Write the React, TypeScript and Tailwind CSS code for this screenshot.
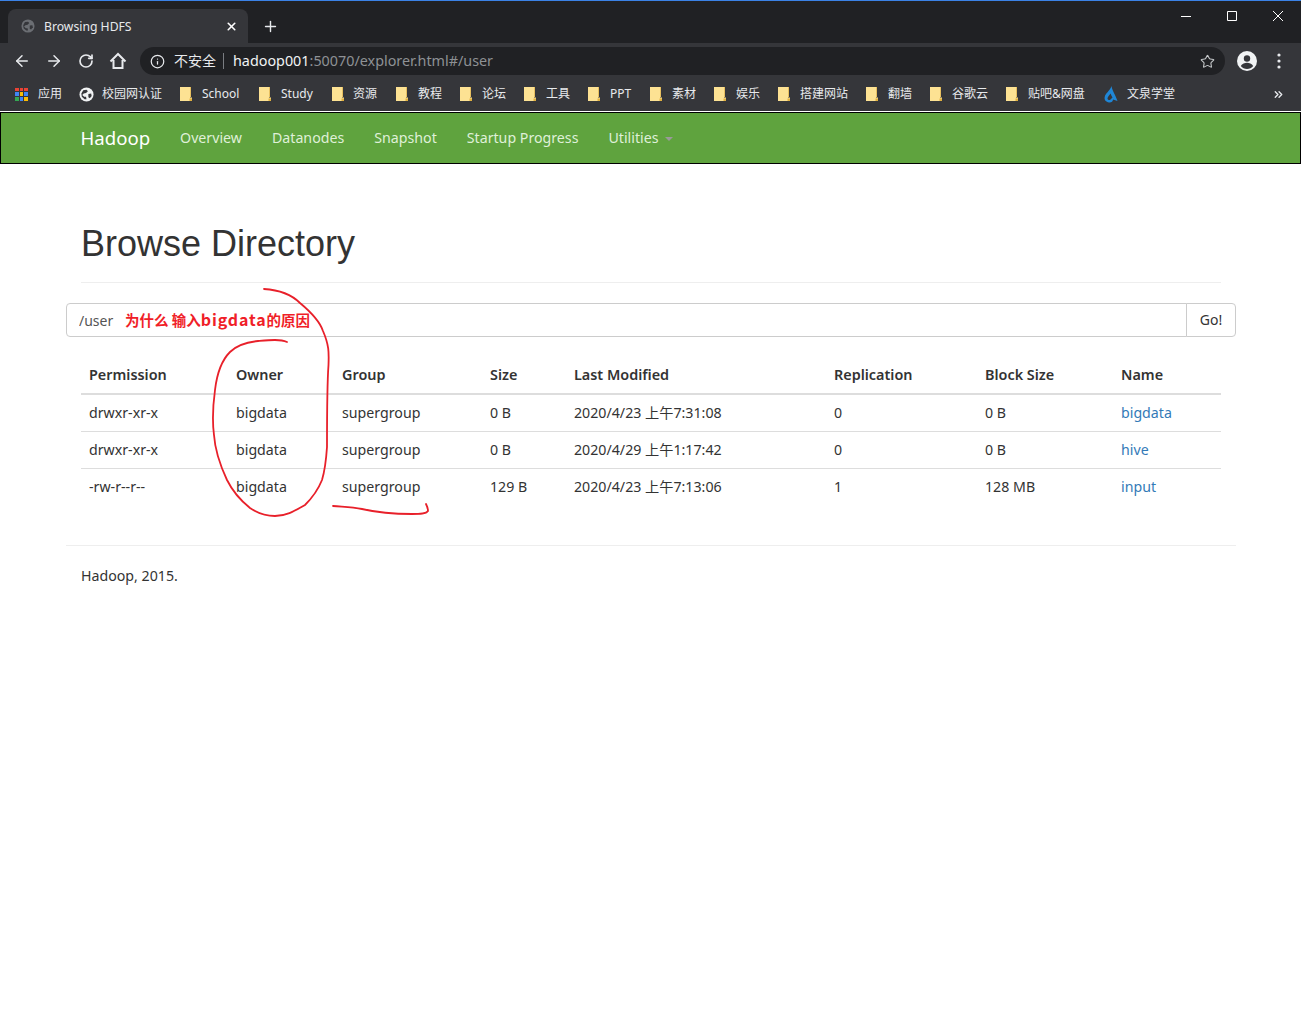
import React from 'react';
import { ArrowLeft, ArrowRight, RotateCw, Star, Info, Plus, X, ChevronsRight } from 'lucide-react';

const uiFont = 'font-["Noto_Sans","Noto_Sans_CJK_SC",sans-serif]';

const bookmarks: { label: string; kind: 'apps' | 'globe' | 'folder' | 'drop'; iconGap: string; width: string }[] = [
  { label: '应用', kind: 'apps', iconGap: 'w-[23px]', width: 'w-[64px]' },
  { label: '校园网认证', kind: 'globe', iconGap: 'w-[23px]', width: 'w-[101px]' },
  { label: 'School', kind: 'folder', iconGap: 'w-[22px]', width: 'w-[79px]' },
  { label: 'Study', kind: 'folder', iconGap: 'w-[22px]', width: 'w-[73px]' },
  { label: '资源', kind: 'folder', iconGap: 'w-[21px]', width: 'w-[64px]' },
  { label: '教程', kind: 'folder', iconGap: 'w-[22px]', width: 'w-[64px]' },
  { label: '论坛', kind: 'folder', iconGap: 'w-[22px]', width: 'w-[64px]' },
  { label: '工具', kind: 'folder', iconGap: 'w-[22px]', width: 'w-[64px]' },
  { label: 'PPT', kind: 'folder', iconGap: 'w-[22px]', width: 'w-[62px]' },
  { label: '素材', kind: 'folder', iconGap: 'w-[22px]', width: 'w-[64px]' },
  { label: '娱乐', kind: 'folder', iconGap: 'w-[22px]', width: 'w-[64px]' },
  { label: '搭建网站', kind: 'folder', iconGap: 'w-[22px]', width: 'w-[88px]' },
  { label: '翻墙', kind: 'folder', iconGap: 'w-[22px]', width: 'w-[64px]' },
  { label: '谷歌云', kind: 'folder', iconGap: 'w-[22px]', width: 'w-[76px]' },
  { label: '贴吧&网盘', kind: 'folder', iconGap: 'w-[22px]', width: 'w-[98px]' },
  { label: '文泉学堂', kind: 'drop', iconGap: 'w-[23px]', width: 'w-[100px]' },
];

const rows = [
  { perm: 'drwxr-xr-x', size: '0 B', modified: '2020/4/23 上午7:31:08', repl: '0', block: '0 B', name: 'bigdata' },
  { perm: 'drwxr-xr-x', size: '0 B', modified: '2020/4/29 上午1:17:42', repl: '0', block: '0 B', name: 'hive' },
  { perm: '-rw-r--r--', size: '129 B', modified: '2020/4/23 上午7:13:06', repl: '1', block: '128 MB', name: 'input' },
];

const GlobeIcon = ({ className }: { className: string }) => (
  <svg viewBox="0 0 16 16" className={className}>
    <circle cx="8" cy="8" r="7.5" fill="currentColor" />
    <path d="M4.500 3.500 8 3 9.500 4.500 7.500 6.500 5 7 3.500 8.500 5.500 10.500 7.500 10.500 8 13 6 13 3 10.500 2.500 7Z" fill="#35363a" />
    <path d="M10 7.500 13 7 13.500 9.500 11.500 12 10 11Z" fill="#35363a" />
  </svg>
);

const BookmarkIcon = ({ kind }: { kind: string }) => {
  if (kind === 'apps') {
    return (
      <div className="grid h-[13px] w-[13px] grid-cols-3 gap-px">
        {['#ea4335', '#ea4335', '#ea4335', '#4285f4', '#fbbc05', '#4285f4', '#34a853', '#4285f4', '#fbbc05'].map((c, i) => (
          <span key={i} style={{ backgroundColor: c }} />
        ))}
      </div>
    );
  }
  if (kind === 'globe') return <GlobeIcon className="h-[15px] w-[15px] text-[#f1f3f4]" />;
  if (kind === 'drop') {
    return (
      <svg viewBox="0 0 14 17" className="h-[17px] w-[14px]">
        <path d="M7.500 0C8 4 11 8 13.500 15L9 13.500C9 15.500 7 17 5 16.500 2 16 0 14 .7 11 1.500 7 6 5 7.500 0Z" fill="#1f86d6" />
        <path d="M6.500 7.500C5.500 9.500 3.500 10.500 3.500 12.500 3.500 14 5.500 14.500 6.500 13.500L8.500 11.500C8 10.500 7 9 6.500 7.500Z" fill="#35363a" />
      </svg>
    );
  }
  return (
    <svg viewBox="0 0 12 14" className="h-[14px] w-[12px]">
      <path d="M0 0H10V10.500H12V14H0Z" fill="#fde293" />
      <path d="M9.500 14V11.500H12V14Z" fill="#e0b040" />
      <path d="M10 0H11V10H10Z" fill="#e8c060" />
    </svg>
  );
};

export default function App() {
  return (
    <div className='relative min-h-[1028px] bg-white font-["Noto_Sans","Noto_Sans_CJK_SC",sans-serif] text-sm text-[#333]'>
      {/* Browser chrome */}
      <div className={`${uiFont} bg-[#35363a] text-[#e8eaed]`}>
        <div className="h-px bg-[#3b82e6]" />
        <div className="flex h-[42px] items-end justify-between bg-[#202124]">
          <div className="flex items-end">
            <div className="ml-2 flex h-[34px] w-[240px] items-center rounded-t-lg bg-[#35363a] pl-[13px] pr-[10px]">
              <GlobeIcon className="h-[14px] w-[14px] text-[#6b6e73]" />
              <span className="ml-[9px] flex-1 pt-px text-[12.2px] text-[#e8eaed]">Browsing HDFS</span>
              <X className="h-[13px] w-[13px] text-white" strokeWidth={3} />
            </div>
            <Plus className="mb-[8px] ml-[14px] h-[17px] w-[17px] text-[#e8eaed]" strokeWidth={2} />
          </div>
          <div className="mb-[22px] flex items-center gap-[36px] pr-[18px] text-white">
            <svg width="10" height="10" viewBox="0 0 10 10" stroke="currentColor" fill="none"><path d="M0 5.500H10" /></svg>
            <svg width="10" height="10" viewBox="0 0 10 10" stroke="currentColor" fill="none"><path d="M.5.500H9.500V9.500H.5Z" /></svg>
            <svg width="10" height="10" viewBox="0 0 10 10" stroke="currentColor" fill="none"><path d="M0 0 10 10M10 0 0 10" /></svg>
          </div>
        </div>
        <div className="flex h-[32px] items-start pl-[13px] pr-[20px] pt-[4px]">
          <div className="flex h-[28px] items-center">
            <ArrowLeft className="h-[18px] w-[18px]" strokeWidth={2} />
            <ArrowRight className="ml-[14px] h-[18px] w-[18px]" strokeWidth={2} />
            <RotateCw className="ml-[15px] h-[16px] w-[16px]" strokeWidth={2.500} />
            <svg viewBox="0 0 18 18" className="ml-[15px] h-[18px] w-[18px]" fill="none" stroke="currentColor" strokeWidth="2">
              <path d="M1.500 9.500 9 2 16.500 9.500M4.500 8V16H13.500V8" />
            </svg>
          </div>
          <div className="ml-[13px] flex h-[28px] flex-1 items-center rounded-full bg-[#202124] pl-[10px] pr-[10px]">
            <Info className="h-[15px] w-[15px]" strokeWidth={2} />
            <span className="ml-[9px] text-[14px] leading-none">不安全</span>
            <span className="ml-[7px] h-[16px] w-px bg-[#7a7d82]" />
            <span className='ml-[9px] flex-1 font-["Noto_Sans",sans-serif] text-[14.35px] text-[#f1f3f4]'>
              hadoop001<span className="text-[#8e9195]">:50070/explorer.html#/user</span>
            </span>
            <Star className="h-[15px] w-[15px] text-[#c4c7c9]" strokeWidth={1.75} />
          </div>
          <div className="flex h-[28px] items-center">
            <svg viewBox="0 0 20 20" className="ml-[12px] h-[20px] w-[20px]">
              <circle cx="10" cy="10" r="10" fill="#f1f3f4" />
              <circle cx="10" cy="7.500" r="3.200" fill="#35363a" />
              <path d="M3.800 15C5 12.500 8 11.800 10 11.800S15 12.500 16.200 15C14.800 16.800 12.500 18 10 18S5.200 16.800 3.800 15Z" fill="#35363a" />
            </svg>
            <svg viewBox="0 0 4 16" className="ml-[20px] h-[16px] w-[4px]" fill="#e8eaed">
              <circle cx="2" cy="2" r="1.600" />
              <circle cx="2" cy="8" r="1.600" />
              <circle cx="2" cy="14" r="1.600" />
            </svg>
          </div>
        </div>
        <div className="flex h-[36px] items-center pl-[15px] pr-[16px] pt-[2px] text-xs">
          {bookmarks.map((b) => (
            <div key={b.label} className={`flex shrink-0 items-center ${b.width}`}>
              <div className={`flex shrink-0 items-center ${b.iconGap}`}>
                <BookmarkIcon kind={b.kind} />
              </div>
              <span className="whitespace-nowrap text-[12px] text-[#e8eaed]">{b.label}</span>
            </div>
          ))}
          <ChevronsRight className="ml-auto h-[13px] w-[13px]" strokeWidth={2.500} />
        </div>
      </div>

      {/* Hadoop navbar */}
      <nav className="mt-px flex h-[52px] items-center border border-black bg-[#5fa33e] pl-[79.500px]">
        <a className="mr-[30px] text-[18.6px] text-white">Hadoop</a>
        <ul className="flex items-center gap-[30px] text-[14.2px] text-[#dff0d8]">
          <li>Overview</li>
          <li>Datanodes</li>
          <li>Snapshot</li>
          <li>Startup Progress</li>
          <li className="flex items-center">
            Utilities
            <span className="ml-[6px] mt-[2px] h-0 w-0 border-x-4 border-t-4 border-x-transparent border-t-[#9a9a9a]" />
          </li>
        </ul>
      </nav>

      {/* Page body */}
      <main className="mx-[66px] w-[1170px]">
        <div className="mx-[15px] mt-[60px] border-b border-[#eee] pb-[18px]">
          <h1 className='mb-0 mt-5 font-["Liberation_Sans",sans-serif] text-[36px] leading-[40px] font-medium text-[#333]'>Browse Directory</h1>
        </div>

        <div className="relative mt-5 flex h-[34px]">
          <input
            readOnly
            value="/user"
            className="h-full flex-1 rounded-l border border-[#ccc] px-3 text-sm text-[#555] outline-none"
          />
          <button className="-ml-px w-[50px] rounded-r border border-[#ccc] bg-white text-sm text-[#333]">Go!</button>
          <span className='absolute left-[59px] top-[7px] font-["Noto_Sans_CJK_SC",sans-serif] text-[14.5px] leading-[18px] font-bold whitespace-nowrap text-[#f01e28]'>
            为什么 输入<span className="text-[16px] tracking-[0.85px]">bigdata</span>的原因
          </span>
        </div>

        <table className="mx-[15px] mt-[20px] w-[1140px] table-fixed border-collapse text-left">
          <colgroup>
            <col className="w-[147px]" />
            <col className="w-[106px]" />
            <col className="w-[148px]" />
            <col className="w-[84px]" />
            <col className="w-[260px]" />
            <col className="w-[151px]" />
            <col className="w-[136px]" />
            <col className="w-[108px]" />
          </colgroup>
          <thead>
            <tr className="border-b-2 border-[#ddd]">
              {['Permission', 'Owner', 'Group', 'Size', 'Last Modified', 'Replication', 'Block Size', 'Name'].map((h) => (
                <th key={h} className="p-2 text-[14.4px] leading-[20px] font-semibold">{h}</th>
              ))}
            </tr>
          </thead>
          <tbody className="text-[14.2px]">
            {rows.map((r, i) => (
              <tr key={r.name} className={i > 0 ? 'border-t border-[#ddd]' : ''}>
                <td className="p-2 leading-[20px]">{r.perm}</td>
                <td className="p-2 leading-[20px]">bigdata</td>
                <td className="p-2 leading-[20px]">supergroup</td>
                <td className="p-2 leading-[20px]">{r.size}</td>
                <td className="p-2 leading-[20px]">{r.modified}</td>
                <td className="p-2 leading-[20px]">{r.repl}</td>
                <td className="p-2 leading-[20px]">{r.block}</td>
                <td className="p-2 leading-[20px] text-[#337ab7]">{r.name}</td>
              </tr>
            ))}
          </tbody>
        </table>

        <hr className="mt-[40px] border-[#eee]" />
        <p className="mx-[15px] mt-5 text-[14.2px] leading-[20px]">Hadoop, 2015.</p>
      </main>

      {/* Red annotations over the screenshot */}
      <svg className="pointer-events-none absolute top-0 left-0" width="1301" height="1028" fill="none" stroke="#e8202a" strokeWidth="1.800" strokeLinecap="round">
        <path d="M264 289C280 290 292 295 300 303C312 313 320 322 323 331C329 345 329 352 328.500 365C327 385 327 420 327 447C326 462 325 470 322 480C318 490 312 498 305 505C296 510 287 516 275 516C264 516 256 512 250 508C240 500 232 490 227 480C220 465 215 450 214 435C212 420 213 405 215 390C217 373 222 360 230 352C237 345 248 342 258 341C270 340 280 339 287 342" />
        <path d="M333 506C345 507 352 507 362 509C375 512 395 514 412 514C420 514 426 514 428 511C428 508 427 506 426 504" />
      </svg>
    </div>
  );
}
